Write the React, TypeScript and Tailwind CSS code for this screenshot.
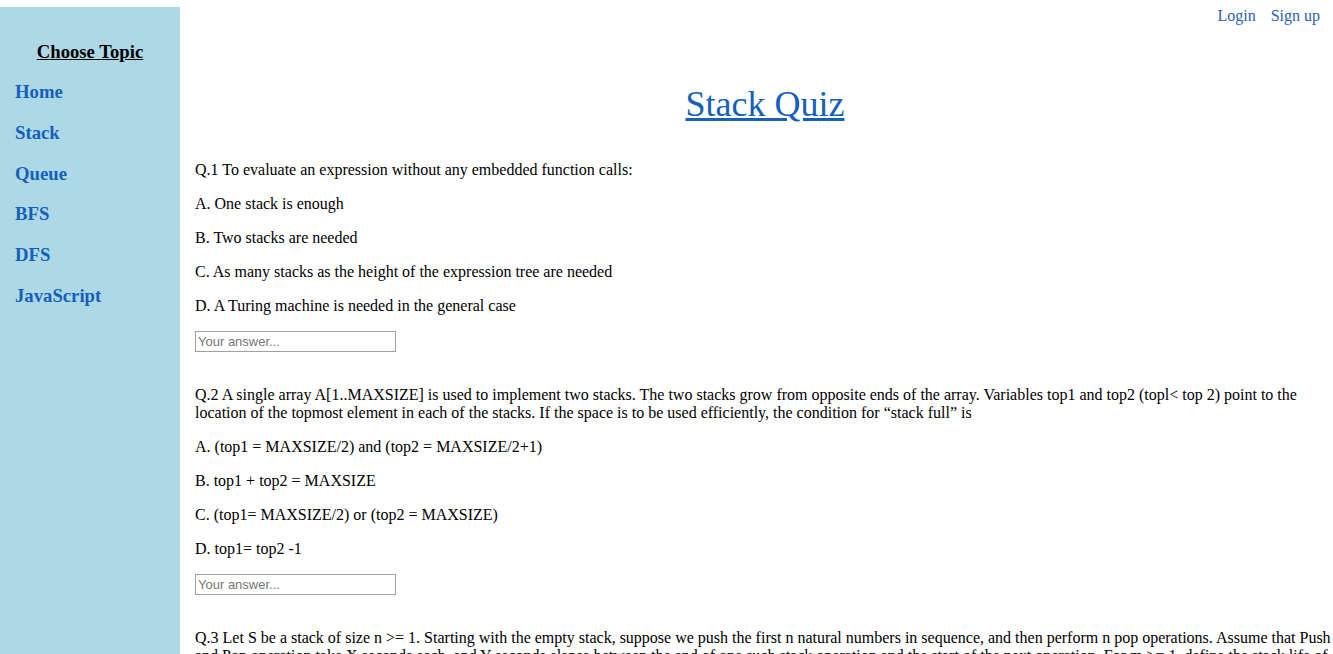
import React from "react";

const serif = { fontFamily: '"Liberation Serif", "Times New Roman", serif' };

function Question({ q, options, first }: { q: string; options: string[]; first?: boolean }) {
  return (
    <div className={first ? "mt-[36px]" : "mt-[34px]"}>
      <p className="text-[16px] leading-[18px] text-black">{q}</p>
      {options.map((o) => (
        <p key={o} className="mt-[16px] text-[16px] leading-[18px] text-black">
          {o}
        </p>
      ))}
      <input
        type="text"
        placeholder="Your answer..."
        className="mt-[16px] block h-[21px] w-[201px] border border-[#a0a0a0] px-[2px] text-[13px] text-black placeholder:text-[#757575] outline-none"
        style={{ fontFamily: '"Liberation Sans", Arial, sans-serif' }}
      />
    </div>
  );
}

export default function App() {
  const nav = ["Home", "Stack", "Queue", "BFS", "DFS", "JavaScript"];
  return (
    <div className="flex min-h-[654px] bg-white" style={serif}>
      <aside className="mt-[7px] w-[180px] shrink-0 bg-[#add8e6] min-h-[700px]">
        <h3 className="mt-[34px] text-center text-[18.72px] font-bold leading-[22px] text-black underline">
          Choose Topic
        </h3>
        <nav className="mt-[18px] flex flex-col gap-[18.8px] pl-[15px]">
          {nav.map((n) => (
            <a key={n} href="#" className="text-[18.72px] font-bold leading-[22px] text-[#1560b8]">
              {n}
            </a>
          ))}
        </nav>
      </aside>
      <main className="min-w-0 flex-1 pl-[15px]">
        <div className="flex justify-end gap-[15px] pr-[13px] pt-[7px] text-[16px] leading-[18px]">
          <a href="#" className="text-[#2d62aa]">Login</a>
          <a href="#" className="text-[#2d62aa]">Sign up</a>
        </div>
        <h1 className="mt-[59px] pl-[2px] text-center text-[36px] leading-[41px]">
          <a href="#" className="text-[#1560b8] underline">Stack Quiz</a>
        </h1>
        <Question
          first
          q="Q.1 To evaluate an expression without any embedded function calls:"
          options={[
            "A. One stack is enough",
            "B. Two stacks are needed",
            "C. As many stacks as the height of the expression tree are needed",
            "D. A Turing machine is needed in the general case",
          ]}
        />
        <Question
          q="Q.2 A single array A[1..MAXSIZE] is used to implement two stacks. The two stacks grow from opposite ends of the array. Variables top1 and top2 (topl< top 2) point to the location of the topmost element in each of the stacks. If the space is to be used efficiently, the condition for “stack full” is"
          options={[
            "A. (top1 = MAXSIZE/2) and (top2 = MAXSIZE/2+1)",
            "B. top1 + top2 = MAXSIZE",
            "C. (top1= MAXSIZE/2) or (top2 = MAXSIZE)",
            "D. top1= top2 -1",
          ]}
        />
        <Question
          q="Q.3 Let S be a stack of size n >= 1. Starting with the empty stack, suppose we push the first n natural numbers in sequence, and then perform n pop operations. Assume that Push and Pop operation take X seconds each, and Y seconds elapse between the end of one such stack operation and the start of the next operation. For m >= 1, define the stack life of m as the time elapsed from the end of Push(m) to the start of the pop operation that removes m from S. The average stack life of an element of this stack is"
          options={[
            "A. n(X+ Y)",
            "B. 3Y + 2X",
            "C. n(X + Y) - X",
            "D. Y + 2X",
          ]}
        />
      </main>
    </div>
  );
}
